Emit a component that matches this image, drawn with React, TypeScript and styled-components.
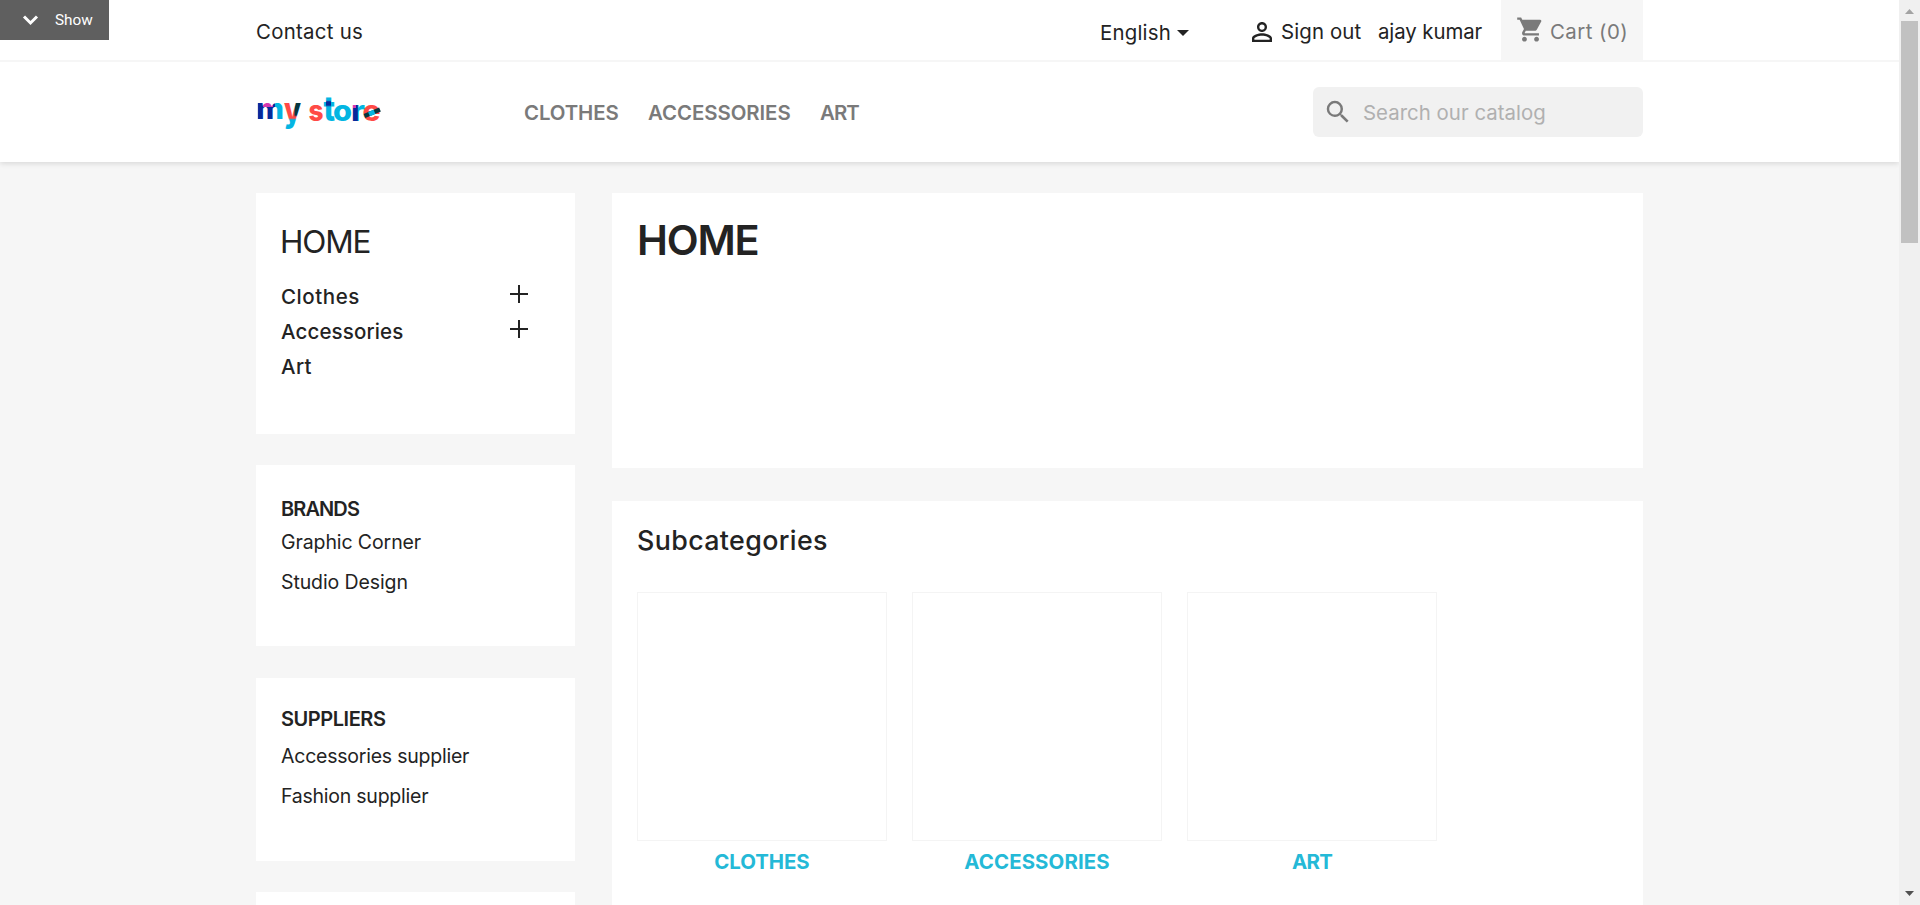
import React from "react";
import styled, { createGlobalStyle } from "styled-components";
import { MdPersonOutline, MdSearch, MdShoppingCart } from "react-icons/md";

const GlobalStyle = createGlobalStyle`
  * { box-sizing: border-box; }
  body {
    margin: 0;
    overflow: hidden;
    background: #f6f6f6;
    color: #232323;
    font-family: Inter, "Liberation Sans", sans-serif;
  }
  svg { display: block; flex: none; }
`;

const Window = styled.div`
  display: flex;
  height: 905px;
  overflow: hidden;
`;

const Page = styled.div`
  flex: 1;
  min-width: 0;
  overflow: hidden;
`;

const Text = styled.span<{ $size?: number; $spacing?: number; $weight?: number }>`
  font-size: ${(p) => p.$size ?? 20.4}px;
  font-weight: ${(p) => p.$weight ?? 400};
  letter-spacing: ${(p) => p.$spacing ?? 0}px;
  line-height: 24px;
  white-space: nowrap;
`;

const Container = styled.div`
  display: flex;
  width: 1387px;
  margin: 0 auto;
`;

const Header = styled.header`
  background: #fff;
  box-shadow: 0 2px 5px 0 rgba(0, 0, 0, 0.11);
`;

const TopBar = styled.div`
  height: 62px;
  border-bottom: 2px solid #f6f6f6;
`;

const TopItem = styled.div<{ $width?: number; $gap?: number; $drop?: number }>`
  display: flex;
  align-items: center;
  gap: ${(p) => p.$gap ?? 0}px;
  width: ${(p) => (p.$width ? `${p.$width}px` : "auto")};
  height: 60px;
  padding-top: ${(p) => 3 + (p.$drop ?? 0)}px;
`;

const TopActions = styled.div`
  display: flex;
  margin-left: auto;
`;

const Cart = styled.div`
  display: flex;
  align-items: center;
  gap: 5px;
  width: 142px;
  height: 62px;
  padding-left: 15px;
  background: #f6f6f6;
  color: #7a7a7a;

  svg { margin-bottom: 4px; }
  span { padding-top: 1px; }
`;

const MainBar = styled(Container)`
  align-items: center;
  height: 100px;
`;

const Menu = styled.nav`
  display: flex;
  margin-left: 142px;
  padding-top: 1px;
  color: #7a7a7a;
`;

const MenuItem = styled(Text)<{ $width: number }>`
  width: ${(p) => p.$width}px;
`;

const Search = styled.div`
  display: flex;
  align-items: center;
  gap: 10px;
  width: 330px;
  height: 50px;
  margin-left: auto;
  padding-left: 10px;
  border-radius: 6px;
  background: #f1f1f1;
  color: #7a7a7a;

  span { padding-top: 1px; color: #b0b0b0; }
`;

const Columns = styled(Container)`
  gap: 37px;
  padding-top: 31px;
  align-items: flex-start;
`;

const Sidebar = styled.aside`
  width: 319px;
`;

const Card = styled.section<{ $height: number; $top: number; $gap: number }>`
  height: ${(p) => p.$height}px;
  margin-bottom: ${(p) => p.$gap}px;
  padding: ${(p) => p.$top}px 25px 0;
  background: #fff;
`;

const SideTitle = styled.h2`
  margin: 0 0 17px -1px;
  font-size: 31.5px;
  font-weight: 400;
  line-height: 40px;
  letter-spacing: -1.15px;
`;

const CategoryRow = styled.div`
  display: flex;
  align-items: center;
  justify-content: space-between;
  height: 35px;
  padding-right: 22px;

  svg { margin-bottom: 5px; }
`;

const SideHeading = styled.h3<{ $spacing: number; $gap: number }>`
  margin: 0 0 ${(p) => p.$gap}px;
  font-size: 20px;
  font-weight: 600;
  line-height: 24px;
  letter-spacing: ${(p) => p.$spacing}px;
`;

const SideLink = styled(Text)`
  display: block;
  line-height: 40px;
`;

const Content = styled.main`
  flex: 1;
`;

const PageTitle = styled.h1`
  margin: 0;
  font-size: 41.5px;
  font-weight: 600;
  line-height: 50px;
  letter-spacing: -1.2px;
`;

const SectionTitle = styled.h2`
  margin: 0 0 36px;
  font-size: 26.8px;
  font-weight: 500;
  line-height: 32px;
  letter-spacing: 0.38px;
`;

const Subcategories = styled.div`
  display: flex;
  gap: 25px;
`;

const Subcategory = styled.div`
  display: flex;
  flex-direction: column;
  align-items: center;
  gap: 9px;
  width: 250px;
  color: #24b9d7;
`;

const Thumb = styled.div`
  width: 250px;
  height: 249px;
  border: 1px solid #f4f4f4;
`;

const ShowTab = styled.button`
  position: absolute;
  top: 0;
  left: 0;
  display: flex;
  align-items: center;
  gap: 16px;
  width: 109px;
  height: 40px;
  padding: 0 0 0 22px;
  border: 0;
  background: #5f5f5f;
  color: #fff;
  font: 400 15.3px/20px Roboto, sans-serif;
`;

const Scrollbar = styled.div`
  display: flex;
  flex-direction: column;
  align-items: center;
  width: 21px;
  padding: 9px 0;
  background: #f0f0f0;
`;

const ScrollThumb = styled.div`
  width: 17px;
  height: 222px;
  margin: 7px 0 auto;
  background: #c1c1c1;
`;

const CYAN = "#04b5e2";
const NAVY = "#07299b";
const RED = "#ff4a46";
const MAGENTA = "#d438b0";
const DARK = "#06363f";

type Tint = { color: string; x: number; y: number; w: number; h: number };
type LogoLetter = {
  char: string;
  x: number;
  baseline: number;
  width: number;
  stretch?: number;
  color: string;
  tints: Tint[];
};

const logoLetters: LogoLetter[] = [
  {
    char: "m", x: 0, baseline: 27, width: 28, color: CYAN,
    tints: [
      { color: NAVY, x: 2, y: 8, w: 17, h: 20 },
      { color: MAGENTA, x: 7, y: 8, w: 10, h: 7 },
    ],
  },
  {
    char: "y", x: 28, baseline: 30, width: 17, stretch: 1.18, color: RED,
    tints: [
      { color: DARK, x: 38.5, y: 8, w: 8, h: 16 },
      { color: CYAN, x: 26, y: 27, w: 20, h: 14 },
    ],
  },
  { char: "s", x: 52.5, baseline: 28.5, width: 15, color: RED, tints: [] },
  {
    char: "t", x: 67.5, baseline: 28.5, width: 11.5, stretch: 1.22, color: CYAN,
    tints: [{ color: NAVY, x: 70, y: 9, w: 5, h: 5 }],
  },
  { char: "o", x: 77, baseline: 28.5, width: 19, color: CYAN, tints: [] },
  {
    char: "r", x: 95, baseline: 28.5, width: 14, color: CYAN,
    tints: [
      { color: NAVY, x: 95, y: 10, w: 6.8, h: 20 },
      { color: MAGENTA, x: 95, y: 9, w: 5, h: 7 },
    ],
  },
  { char: "e", x: 106.5, baseline: 28.5, width: 18, color: RED, tints: [] },
];

function Logo() {
  return (
    <svg width="126" height="40" viewBox="0 0 126 40" fontFamily="Inter, sans-serif" fontSize="29" fontWeight="800">
      {logoLetters.map((l) => {
        const stretch = l.stretch ?? 1;
        return (
          <g key={l.char}>
            <pattern
              id={`logo-${l.char}`}
              width="126"
              height="40"
              patternUnits="userSpaceOnUse"
              patternTransform={`scale(1 ${1 / stretch}) translate(${-l.x} ${-l.baseline})`}
            >
              <rect width="126" height="40" fill={l.color} />
              {l.tints.map((t, j) => (
                <rect key={j} x={t.x} y={t.y} width={t.w} height={t.h} fill={t.color} />
              ))}
            </pattern>
            <text
              transform={`translate(${l.x} ${l.baseline}) scale(1 ${stretch})`}
              textLength={l.width}
              lengthAdjust="spacingAndGlyphs"
              fill={`url(#logo-${l.char})`}
            >
              {l.char}
            </text>
          </g>
        );
      })}
      <g strokeWidth="4.6">
        <path d="M108.5 24L124 17.5" stroke={DARK} />
        <path d="M113 22.1L118.5 19.8" stroke={CYAN} />
      </g>
    </svg>
  );
}

function Plus() {
  return (
    <svg width="18" height="18" viewBox="0 0 18 18" stroke="#232323" strokeWidth="2">
      <path d="M0 9H18M9 0V18" />
    </svg>
  );
}

const categories = [
  { name: "Clothes", spacing: 0.55, expandable: true },
  { name: "Accessories", spacing: 0.12, expandable: true },
  { name: "Art", spacing: 0.4, expandable: false },
];

const subcategories = [
  { name: "CLOTHES", spacing: -0.05 },
  { name: "ACCESSORIES", spacing: 0.11 },
  { name: "ART", spacing: -0.7 },
];

export default function App() {
  return (
    <>
      <GlobalStyle />
      <Window>
        <Page>
          <Header>
            <TopBar>
              <Container>
                <TopItem>
                  <Text $spacing={0.28}>Contact us</Text>
                </TopItem>
                <TopActions>
                  <TopItem $width={147} $gap={6} $drop={2}>
                    <Text $spacing={0.2}>English</Text>
                    <svg width="12" height="6" viewBox="0 0 12 6" fill="#232323">
                      <path d="M0 0H12L6 6Z" />
                    </svg>
                  </TopItem>
                  <TopItem $width={131} $gap={4}>
                    <MdPersonOutline size={30} />
                    <Text $spacing={0.12}>Sign out</Text>
                  </TopItem>
                  <TopItem $width={123}>
                    <Text $spacing={-0.08}>ajay kumar</Text>
                  </TopItem>
                  <Cart>
                    <MdShoppingCart size={29} />
                    <Text $spacing={0.46}>Cart (0)</Text>
                  </Cart>
                </TopActions>
              </Container>
            </TopBar>
            <MainBar>
              <Logo />
              <Menu>
                <MenuItem $width={124} $weight={600} $spacing={-0.1}>CLOTHES</MenuItem>
                <MenuItem $width={172} $weight={600} $spacing={-0.05}>ACCESSORIES</MenuItem>
                <MenuItem $width={50} $weight={600} $spacing={-0.9}>ART</MenuItem>
              </Menu>
              <Search>
                <MdSearch size={30} />
                <Text $spacing={0.03}>Search our catalog</Text>
              </Search>
            </MainBar>
          </Header>
          <Columns>
            <Sidebar>
              <Card $height={241} $top={29} $gap={31}>
                <SideTitle>HOME</SideTitle>
                {categories.map((c) => (
                  <CategoryRow key={c.name}>
                    <Text $size={20.5} $weight={500} $spacing={c.spacing}>{c.name}</Text>
                    {c.expandable && <Plus />}
                  </CategoryRow>
                ))}
              </Card>
              <Card $height={181} $top={32} $gap={32}>
                <SideHeading $spacing={-0.9} $gap={1}>BRANDS</SideHeading>
                <SideLink $size={19.5} $spacing={-0.1}>Graphic Corner</SideLink>
                <SideLink $size={19.5} $spacing={-0.1}>Studio Design</SideLink>
              </Card>
              <Card $height={183} $top={29} $gap={31}>
                <SideHeading $spacing={-0.45} $gap={5}>SUPPLIERS</SideHeading>
                <SideLink $size={19.5} $spacing={-0.23}>Accessories supplier</SideLink>
                <SideLink $size={19.5} $spacing={-0.24}>Fashion supplier</SideLink>
              </Card>
              <Card $height={180} $top={29} $gap={0} />
            </Sidebar>
            <Content>
              <Card $height={275} $top={22} $gap={33}>
                <PageTitle>HOME</PageTitle>
              </Card>
              <Card $height={460} $top={23} $gap={0}>
                <SectionTitle>Subcategories</SectionTitle>
                <Subcategories>
                  {subcategories.map((s) => (
                    <Subcategory key={s.name}>
                      <Thumb />
                      <Text $weight={700} $spacing={s.spacing}>{s.name}</Text>
                    </Subcategory>
                  ))}
                </Subcategories>
              </Card>
            </Content>
          </Columns>
        </Page>
        <Scrollbar>
          <svg width="9" height="5" viewBox="0 0 9 5" fill="#a3a3a3">
            <path d="M0 5H9L4.5 0Z" />
          </svg>
          <ScrollThumb />
          <svg width="9" height="5" viewBox="0 0 9 5" fill="#505050">
            <path d="M0 0H9L4.5 5Z" />
          </svg>
        </Scrollbar>
      </Window>
      <ShowTab>
        <svg width="17" height="12" viewBox="0 0 17 12" fill="none" stroke="#fff" strokeWidth="3">
          <path d="M2 2.5L8.5 9L15 2.5" />
        </svg>
        Show
      </ShowTab>
    </>
  );
}
